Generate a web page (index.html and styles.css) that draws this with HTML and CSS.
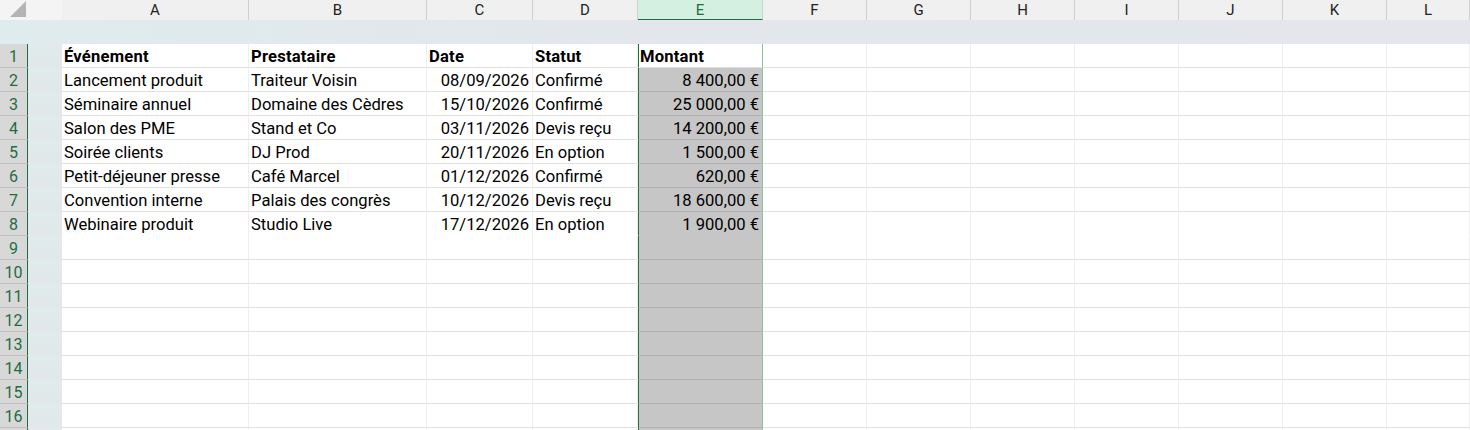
FILE: index.html
```html
<!DOCTYPE html>
<html lang="fr">
<head>
  <meta charset="UTF-8" />
  <title>Classeur</title>
  <link rel="stylesheet" href="styles.css">
</head>
<body>
  <div class="sheet">
    <div class="row col-head">
      <div class="corner"><span class="tri"></span></div>
      <div class="gap"></div>
      <div>A</div><div>B</div><div>C</div><div>D</div><div class="sel">E</div>
      <div>F</div><div>G</div><div>H</div><div>I</div><div>J</div><div>K</div><div>L</div>
    </div>

    <div class="freeze-band"></div>

    <div class="row head-row">
      <div class="num">1</div><div class="gap"></div>
      <div class="c">Événement</div><div class="c">Prestataire</div><div class="c">Date</div><div class="c">Statut</div>
      <div class="c e first">Montant</div>
      <div class="c"></div><div class="c"></div><div class="c"></div><div class="c"></div><div class="c"></div><div class="c"></div><div class="c"></div>
    </div>

    <div class="row">
      <div class="num">2</div><div class="gap"></div>
      <div class="c">Lancement produit</div><div class="c">Traiteur Voisin</div><div class="c r">08/09/2026</div><div class="c">Confirmé</div>
      <div class="c e r">8 400,00 €</div>
      <div class="c"></div><div class="c"></div><div class="c"></div><div class="c"></div><div class="c"></div><div class="c"></div><div class="c"></div>
    </div>
    <div class="row">
      <div class="num">3</div><div class="gap"></div>
      <div class="c">Séminaire annuel</div><div class="c">Domaine des Cèdres</div><div class="c r">15/10/2026</div><div class="c">Confirmé</div>
      <div class="c e r">25 000,00 €</div>
      <div class="c"></div><div class="c"></div><div class="c"></div><div class="c"></div><div class="c"></div><div class="c"></div><div class="c"></div>
    </div>
    <div class="row">
      <div class="num">4</div><div class="gap"></div>
      <div class="c">Salon des PME</div><div class="c">Stand et Co</div><div class="c r">03/11/2026</div><div class="c">Devis reçu</div>
      <div class="c e r">14 200,00 €</div>
      <div class="c"></div><div class="c"></div><div class="c"></div><div class="c"></div><div class="c"></div><div class="c"></div><div class="c"></div>
    </div>
    <div class="row">
      <div class="num">5</div><div class="gap"></div>
      <div class="c">Soirée clients</div><div class="c">DJ Prod</div><div class="c r">20/11/2026</div><div class="c">En option</div>
      <div class="c e r">1 500,00 €</div>
      <div class="c"></div><div class="c"></div><div class="c"></div><div class="c"></div><div class="c"></div><div class="c"></div><div class="c"></div>
    </div>
    <div class="row">
      <div class="num">6</div><div class="gap"></div>
      <div class="c">Petit-déjeuner presse</div><div class="c">Café Marcel</div><div class="c r">01/12/2026</div><div class="c">Confirmé</div>
      <div class="c e r">620,00 €</div>
      <div class="c"></div><div class="c"></div><div class="c"></div><div class="c"></div><div class="c"></div><div class="c"></div><div class="c"></div>
    </div>
    <div class="row">
      <div class="num">7</div><div class="gap"></div>
      <div class="c">Convention interne</div><div class="c">Palais des congrès</div><div class="c r">10/12/2026</div><div class="c">Devis reçu</div>
      <div class="c e r">18 600,00 €</div>
      <div class="c"></div><div class="c"></div><div class="c"></div><div class="c"></div><div class="c"></div><div class="c"></div><div class="c"></div>
    </div>
    <div class="row no-line">
      <div class="num">8</div><div class="gap"></div>
      <div class="c">Webinaire produit</div><div class="c">Studio Live</div><div class="c r">17/12/2026</div><div class="c">En option</div>
      <div class="c e r">1 900,00 €</div>
      <div class="c"></div><div class="c"></div><div class="c"></div><div class="c"></div><div class="c"></div><div class="c"></div><div class="c"></div>
    </div>

    <div class="row"><div class="num">9</div><div class="gap"></div><div class="c"></div><div class="c"></div><div class="c"></div><div class="c"></div><div class="c e"></div><div class="c"></div><div class="c"></div><div class="c"></div><div class="c"></div><div class="c"></div><div class="c"></div><div class="c"></div></div>
    <div class="row"><div class="num">10</div><div class="gap"></div><div class="c"></div><div class="c"></div><div class="c"></div><div class="c"></div><div class="c e"></div><div class="c"></div><div class="c"></div><div class="c"></div><div class="c"></div><div class="c"></div><div class="c"></div><div class="c"></div></div>
    <div class="row"><div class="num">11</div><div class="gap"></div><div class="c"></div><div class="c"></div><div class="c"></div><div class="c"></div><div class="c e"></div><div class="c"></div><div class="c"></div><div class="c"></div><div class="c"></div><div class="c"></div><div class="c"></div><div class="c"></div></div>
    <div class="row"><div class="num">12</div><div class="gap"></div><div class="c"></div><div class="c"></div><div class="c"></div><div class="c"></div><div class="c e"></div><div class="c"></div><div class="c"></div><div class="c"></div><div class="c"></div><div class="c"></div><div class="c"></div><div class="c"></div></div>
    <div class="row"><div class="num">13</div><div class="gap"></div><div class="c"></div><div class="c"></div><div class="c"></div><div class="c"></div><div class="c e"></div><div class="c"></div><div class="c"></div><div class="c"></div><div class="c"></div><div class="c"></div><div class="c"></div><div class="c"></div></div>
    <div class="row"><div class="num">14</div><div class="gap"></div><div class="c"></div><div class="c"></div><div class="c"></div><div class="c"></div><div class="c e"></div><div class="c"></div><div class="c"></div><div class="c"></div><div class="c"></div><div class="c"></div><div class="c"></div><div class="c"></div></div>
    <div class="row"><div class="num">15</div><div class="gap"></div><div class="c"></div><div class="c"></div><div class="c"></div><div class="c"></div><div class="c e"></div><div class="c"></div><div class="c"></div><div class="c"></div><div class="c"></div><div class="c"></div><div class="c"></div><div class="c"></div></div>
    <div class="row"><div class="num">16</div><div class="gap"></div><div class="c"></div><div class="c"></div><div class="c"></div><div class="c"></div><div class="c e"></div><div class="c"></div><div class="c"></div><div class="c"></div><div class="c"></div><div class="c"></div><div class="c"></div><div class="c"></div></div>
    <div class="row"><div class="num"></div><div class="gap"></div><div class="c"></div><div class="c"></div><div class="c"></div><div class="c"></div><div class="c e"></div><div class="c"></div><div class="c"></div><div class="c"></div><div class="c"></div><div class="c"></div><div class="c"></div><div class="c"></div></div>
  </div>
</body>
</html>
```

FILE: styles.css
```css
html, body {
  margin: 0;
  height: 100%;
  overflow: hidden;
}

body {
  background: #ffffff;
  font-family: 'Roboto', 'Liberation Sans', sans-serif;
  color: #000;
}

.sheet {
  width: 1470px;
}

.row {
  display: grid;
  grid-template-columns: 28px 34px 187px 178px 106px 105px 125px 104px 104px 104px 104px 104px 104px 1fr;
  height: 24px;
}

/* column letters */
.col-head {
  height: 20px;
  background: #f0f0f0;
  font-size: 15px;
  color: #222;
}

.col-head > div {
  display: flex;
  align-items: center;
  justify-content: center;
  border-right: 1px solid #cfcfcf;
}

.col-head .corner,
.col-head .gap {
  background: #f4f4f4;
  border-right: none;
}

.corner {
  position: relative;
}

.corner .tri {
  position: absolute;
  right: 2px;
  bottom: 3px;
  width: 0;
  height: 0;
  border-left: 16px solid transparent;
  border-bottom: 16px solid #b4b4b4;
}

.col-head .sel {
  background: #d3f0e0;
  color: #1e6e42;
  border-bottom: 1px solid #1e6e42;
}

.freeze-band {
  height: 24px;
  background: linear-gradient(90deg, #dfeced 0%, #e3e7eb 40%, #e4e6eb 100%);
}

/* row numbers */
.num {
  background: #d8d8d8;
  color: #1e6e42;
  font-size: 16px;
  padding-top: 1px;
  border-right: 1px solid #1e6e42;
  border-bottom: 1px solid #c2c2c2;
  display: flex;
  align-items: center;
  justify-content: center;
}

.gap {
  background: linear-gradient(180deg, #e1ebec 0%, #e2e7ea 100%);
}

.c {
  font-size: 16.6px;
  line-height: 22px;
  padding: 2px 3px 0 2px;
  white-space: nowrap;
  overflow: hidden;
  border-bottom: 1px solid #e1e1e1;
  border-right: 1px solid #eeeeee;
}

.head-row .c {
  font-weight: bold;
  letter-spacing: 0.2px;
}

.c.r {
  text-align: right;
}

.c.e {
  background: #c6c6c6;
  border-left: 1px solid #1e6e42;
  border-right: 1px solid #8fbf9f;
  border-bottom-color: #b0b0b0;
  padding-left: 1px;
}

.head-row .c.e {
  background: #ffffff;
  border-bottom-color: #e1e1e1;
  position: relative;
}

.head-row .c.e::after {
  content: "";
  position: absolute;
  right: -3px;
  top: 0;
  width: 3px;
  height: 3px;
  background: #1e6e42;
}

.no-line .c {
  border-bottom-color: transparent;
}

.no-line .c.e {
  border-bottom-color: #c6c6c6;
}
```
